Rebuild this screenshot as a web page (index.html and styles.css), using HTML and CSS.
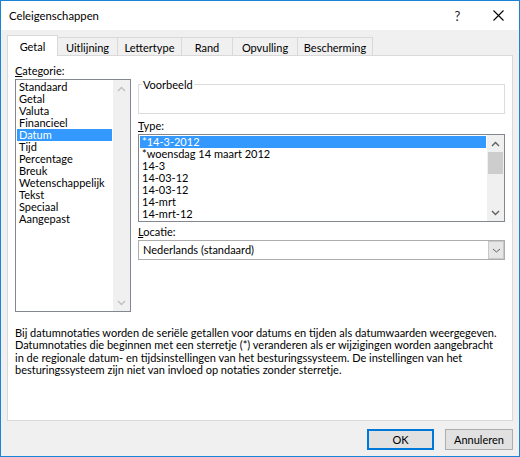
FILE: index.html
```html
<!DOCTYPE html>
<html lang="nl">
<head>
<meta charset="utf-8">
<title>Celeigenschappen</title>
<link rel="stylesheet" href="styles.css">
</head>
<body>
<div class="window">
  <div class="titlebar">
    <span class="title">Celeigenschappen</span>
    <span class="capbtn help">?</span>
    <span class="capbtn close"><svg width="11" height="11" viewBox="0 0 11 11"><path d="M0.5 0.5L10.5 10.5M10.5 0.5L0.5 10.5" stroke="#000" stroke-width="1.1" fill="none"/></svg></span>
  </div>
  <div class="body">
    <div class="tabs">
      <div class="tab active t1">Getal</div>
      <div class="tab t2">Uitlijning</div>
      <div class="tab t3">Lettertype</div>
      <div class="tab t4">Rand</div>
      <div class="tab t5">Opvulling</div>
      <div class="tab t6">Bescherming</div>
    </div>
    <div class="panel">
      <div class="row">
        <div class="col-left">
          <div class="label"><u>C</u>ategorie:</div>
          <div class="listbox catlist">
            <div class="items">
              <div class="item">Standaard</div>
              <div class="item">Getal</div>
              <div class="item">Valuta</div>
              <div class="item">Financieel</div>
              <div class="item sel">Datum</div>
              <div class="item">Tijd</div>
              <div class="item">Percentage</div>
              <div class="item">Breuk</div>
              <div class="item">Wetenschappelijk</div>
              <div class="item">Tekst</div>
              <div class="item">Speciaal</div>
              <div class="item">Aangepast</div>
            </div>
            <div class="sb disabled">
              <div class="sb-btn"><svg width="9" height="6" viewBox="0 0 9 6"><path d="M1 5L4.5 1.5L8 5" stroke="currentColor" stroke-width="1.4" fill="none"/></svg></div>
              <div class="sb-track"></div>
              <div class="sb-btn"><svg width="9" height="6" viewBox="0 0 9 6"><path d="M1 1L4.5 4.5L8 1" stroke="currentColor" stroke-width="1.4" fill="none"/></svg></div>
            </div>
          </div>
        </div>
        <div class="col-right">
          <div class="group">
            <span class="group-label">Voorbeeld</span>
          </div>
          <div class="label type-label"><u>T</u>ype:</div>
          <div class="listbox typelist">
            <div class="items">
              <div class="item sel">*14-3-2012</div>
              <div class="item">*woensdag 14 maart 2012</div>
              <div class="item">14-3</div>
              <div class="item">14-03-12</div>
              <div class="item">14-03-12</div>
              <div class="item">14-mrt</div>
              <div class="item">14-mrt-12</div>
            </div>
            <div class="sb">
              <div class="sb-btn"><svg width="9" height="6" viewBox="0 0 9 6"><path d="M1 5L4.5 1.5L8 5" stroke="currentColor" stroke-width="1.4" fill="none"/></svg></div>
              <div class="sb-thumb"></div>
              <div class="sb-track"></div>
              <div class="sb-btn"><svg width="9" height="6" viewBox="0 0 9 6"><path d="M1 1L4.5 4.5L8 1" stroke="currentColor" stroke-width="1.4" fill="none"/></svg></div>
            </div>
          </div>
          <div class="label loc-label"><u>L</u>ocatie:</div>
          <div class="select">
            <span class="select-text">Nederlands (standaard)</span>
            <span class="select-btn"><svg width="9" height="5" viewBox="0 0 9 5"><path d="M1 1L4.5 4L8 1" stroke="#606060" stroke-width="1" fill="none"/></svg></span>
          </div>
        </div>
      </div>
      <p class="desc">Bij datumnotaties worden de seriële getallen voor datums en tijden als datumwaarden weergegeven.<br>Datumnotaties die beginnen met een sterretje (*) veranderen als er wijzigingen worden aangebracht<br>in de regionale datum- en tijdsinstellingen van het besturingssysteem. De instellingen van het<br>besturingssysteem zijn niet van invloed op notaties zonder sterretje.</p>
    </div>
    <div class="buttons">
      <button class="btn default">OK</button>
      <button class="btn cancel">Annuleren</button>
    </div>
  </div>
</div>
</body>
</html>
```
FILE: styles.css
```css
* { box-sizing: border-box; }
html, body { margin: 0; padding: 0; background: #fff; }
body {
  font-family: Lato, "Noto Sans", sans-serif;
  font-size: 11px;
  color: #000;
}
.window {
  width: 520px;
  height: 457px;
  border: 1px solid #1883d7;
  background: #f0f0f0;
  display: flex;
  flex-direction: column;
}
.titlebar {
  height: 29px;
  flex: none;
  background: #fff;
  display: flex;
  align-items: center;
  padding-left: 8px;
  font-size: 11.3px;
}
.title { flex: 1; }
.capbtn {
  width: 41px;
  height: 29px;
  display: flex;
  align-items: center;
  justify-content: center;
}
.help { font-size: 13px; color: #222; }
.body {
  flex: 1;
  padding: 5px 6px 0 6px;
  display: flex;
  flex-direction: column;
}
.tabs {
  display: flex;
  align-items: flex-end;
  height: 20px;
  position: relative;
  z-index: 1;
}
.tab {
  height: 18px;
  border: 1px solid #d9d9d9;
  border-bottom: none;
  background: #f0f0f0;
  display: flex;
  align-items: center;
  justify-content: center;
  margin-right: -1px;
  padding-top: 1px;
  white-space: nowrap;
}
.tab.active {
  height: 21px;
  margin-bottom: -1px;
  background: #fff;
  position: relative;
  z-index: 2;
  padding-top: 0;
}
.t1 { width: 51px; }
.t2 { width: 61px; }
.t3 { width: 65px; }
.t4 { width: 52px; }
.t5 { width: 66px; }
.t6 { width: 76px; }
.panel {
  height: 366px;
  flex: none;
  border: 1px solid #d9d9d9;
  background: #fff;
  padding: 7px 7px 0 7px;
  display: flex;
  flex-direction: column;
}
.row {
  display: flex;
  gap: 7px;
}
.col-left { width: 116px; flex: none; }
.col-right { flex: 1; min-width: 0; }
.label {
  height: 16px;
  line-height: 16px;
  white-space: nowrap;
}
.listbox {
  display: flex;
  border: 1px solid #828790;
  background: #fff;
}
.catlist { height: 233px; }
.typelist { height: 88px; }
.items {
  flex: 1;
  padding: 1px;
  min-width: 0;
}
.item {
  height: 12px;
  line-height: 12px;
  padding-left: 2px;
  white-space: nowrap;
}
.item.sel {
  background: #3399ff;
  color: #fff;
}
.sb {
  width: 17px;
  flex: none;
  background: #f0f0f0;
  display: flex;
  flex-direction: column;
  color: #606060;
}
.sb.disabled { color: #c0c0c0; }
.sb-btn {
  height: 17px;
  flex: none;
  display: flex;
  align-items: center;
  justify-content: center;
}
.sb-thumb {
  height: 22px;
  flex: none;
  margin: 0 1px;
  background: #cdcdcd;
}
.sb-track { flex: 1; }
.group {
  margin-top: 21px;
  height: 30px;
  border: 1px solid #dcdcdc;
  position: relative;
}
.group-label {
  position: absolute;
  left: 3px;
  top: -8px;
  line-height: 16px;
  padding: 0 1px;
  background: #fff;
}
.type-label { margin-top: 4px; }
.loc-label { margin-top: 2px; }
.select {
  height: 20px;
  border: 1px solid #adadad;
  background: #fff;
  display: flex;
  align-items: stretch;
}
.select-text {
  flex: 1;
  padding-left: 4px;
  line-height: 18px;
}
.select-btn {
  width: 16px;
  border: 1px solid #c8c8c8;
  background: #e6e6e6;
  display: flex;
  align-items: center;
  justify-content: center;
}
.desc {
  margin: 15px 0 0 0;
  line-height: 12.4px;
  white-space: nowrap;
}
.buttons {
  display: flex;
  justify-content: flex-end;
  gap: 11px;
  margin-top: 8px;
}
.btn {
  height: 21px;
  border: 1px solid #adadad;
  background: #e1e1e1;
  font: inherit;
  color: #000;
  padding: 0;
}
.btn.default {
  width: 67px;
  border-color: #0078d7;
  box-shadow: inset 0 0 0 1px #0078d7;
}
.btn.cancel { width: 68px; }
```
